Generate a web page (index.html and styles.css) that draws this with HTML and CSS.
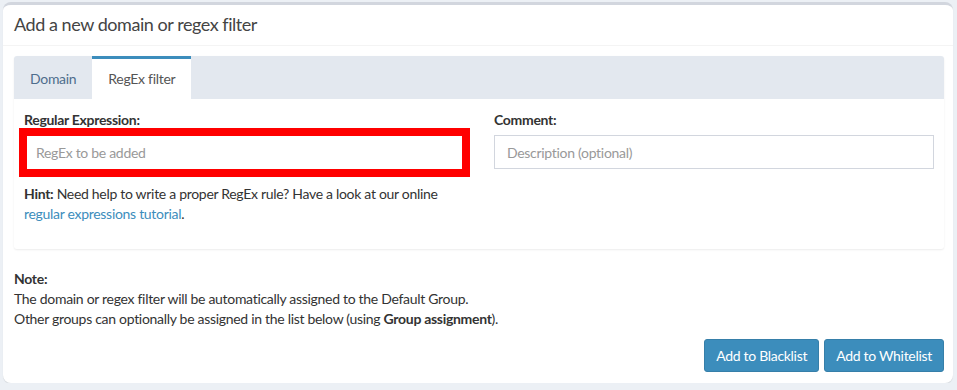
FILE: index.html
```html
<!DOCTYPE html>
<html lang="en">
<head>
  <meta charset="UTF-8" />
  <title>Add a new domain or regex filter</title>
  <link rel="stylesheet" href="styles.css">
</head>
<body>
  <div class="box">
    <div class="box-header">
      <h3>Add a new domain or regex filter</h3>
    </div>
    <div class="box-body">
      <div class="tabs">
        <ul class="tab-bar">
          <li><a href="#">Domain</a></li>
          <li class="active"><a href="#">RegEx filter</a></li>
        </ul>
        <div class="tab-content">
          <div class="row">
            <div class="col">
              <label>Regular Expression:</label>
              <div class="highlight">
                <input type="text" placeholder="RegEx to be added">
              </div>
              <p class="hint"><strong>Hint:</strong> Need help to write a proper RegEx rule? Have a look at our online <a href="#">regular expressions tutorial</a>.</p>
            </div>
            <div class="col">
              <label>Comment:</label>
              <input type="text" class="form-control" placeholder="Description (optional)">
            </div>
          </div>
        </div>
      </div>
      <div class="note">
        <strong>Note:</strong><br>
        The domain or regex filter will be automatically assigned to the Default Group.<br>
        Other groups can optionally be assigned in the list below (using <strong>Group assignment</strong>).
      </div>
      <div class="actions">
        <button>Add to Blacklist</button>
        <button>Add to Whitelist</button>
      </div>
    </div>
  </div>
</body>
</html>
```

FILE: styles.css
```css
* {
  box-sizing: border-box;
}
body {
  margin: 0;
  padding: 2px 4px 0 3px;
  background: #ecf0f5;
  font-family: Lato, 'Noto Sans', sans-serif;
  font-size: 14px;
  letter-spacing: -0.3px;
  color: #333;
}
.box {
  background: #fff;
  border-top: 3px solid #d2d6de;
  border-radius: 8px;
  box-shadow: 0 1px 1px rgba(0,0,0,0.1);
  height: 381px;
}
.box-header {
  height: 41px;
  padding: 0 11px 3px;
  border-bottom: 1px solid #f4f4f4;
  display: flex;
  align-items: center;
}
.box-header h3 {
  margin: 0;
  font-size: 18px;
  font-weight: normal;
  letter-spacing: -0.45px;
  color: #444;
}
.box-body {
  padding: 10px 9px 10px 11px;
}
.tabs {
  box-shadow: 0 1px 2px rgba(0,0,0,0.08);
  border-radius: 3px;
}
.tab-bar {
  list-style: none;
  margin: 0;
  padding: 0;
  display: flex;
  background: #e3e8ef;
  border-radius: 3px 3px 0 0;
  height: 43px;
}
.tab-bar li {
  border-top: 3px solid transparent;
}
.tab-bar li a {
  display: block;
  padding: 0 16px;
  line-height: 40px;
  color: #4e6d8c;
  text-decoration: none;
}
.tab-bar li.active {
  background: #fff;
  border-top-color: #3c8dbc;
}
.tab-bar li.active a {
  color: #555;
}
.tab-content {
  padding: 11px 10px 14px 10px;
  height: 150px;
}
.row {
  display: grid;
  grid-template-columns: 441px 440px;
  gap: 29px;
}
label {
  display: block;
  font-weight: bold;
  margin-bottom: 5px;
  line-height: 20px;
}
input {
  font-family: inherit;
  font-size: 14px;
  letter-spacing: -0.3px;
  color: #555;
  width: 100%;
  height: 34px;
  padding: 6px 12px;
  border: 1px solid #d2d6de;
  outline: none;
}
input::placeholder {
  color: #999;
}
.highlight {
  margin: -7px -5px -8px;
  height: 49px;
  border: 8px solid #ff0000;
}
.highlight input {
  border: none;
  height: 33px;
  padding: 6px 9px;
}
.hint {
  margin: 15px 0 0;
  line-height: 20px;
}
.hint a {
  color: #3c8dbc;
  text-decoration: none;
}
.note {
  margin-top: 20px;
  line-height: 20px;
}
.actions {
  display: flex;
  justify-content: flex-end;
  gap: 5px;
  margin-top: 10px;
}
.actions button {
  font-family: inherit;
  font-size: 14px;
  letter-spacing: -0.3px;
  color: #fff;
  background: #3c8dbc;
  border: 1px solid #367fa9;
  border-radius: 3px;
  height: 33px;
  padding: 0 11px;
}
```
